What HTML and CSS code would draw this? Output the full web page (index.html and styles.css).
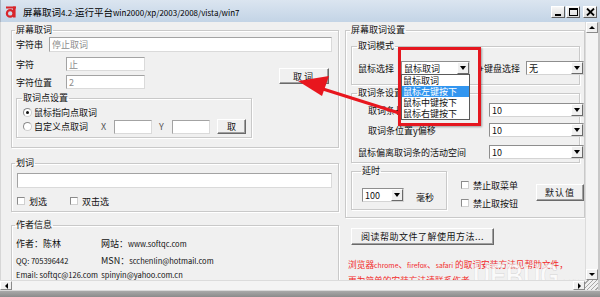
FILE: index.html
```html
<!DOCTYPE html>
<html>
<head>
	<title>屏幕取词4.2</title>
	<meta charset="UTF-8">
	<link rel="stylesheet" href="styles.css">
</head>
<body>
	<div class="window">
		<div class="titlebar">
			<svg class="app-icon" width="12" height="12" viewBox="0 0 12 12">
				<rect x="1" y="0.5" width="10" height="2" fill="#d8262c"/>
				<rect x="8" y="0.5" width="2.6" height="11" fill="#d8262c"/>
				<circle cx="5.2" cy="7.4" r="3.3" fill="none" stroke="#d8262c" stroke-width="2.2"/>
			</svg>
			<span class="title">屏幕取词<em>4.2-</em>运行平台<em>win2000/xp/2003/2008/vista/win7</em></span>
			<div class="caption">
				<span class="cbtn"><i class="ic-min"></i></span>
				<span class="cbtn"><i class="ic-max"></i></span>
				<span class="cbtn close">
					<svg width="9" height="8" viewBox="0 0 9 8"><path d="M1 0.5 L8 7.5 M8 0.5 L1 7.5" stroke="#000" stroke-width="1.8"/></svg>
				</span>
			</div>
		</div>

		<div class="frame">
			<div class="client">
				<!-- 左侧 -->
				<div class="col-left">
					<fieldset class="group g-main">
						<legend>屏幕取词</legend>
						<div class="row r-str">
							<label class="lab-str">字符串</label>
							<input class="txt dim grow" value="停止取词" readonly>
						</div>
						<div class="pair">
							<div class="fields">
								<div class="row r-ch">
									<label class="lab-ch">字符</label>
									<input class="txt dim short" value="止" readonly>
								</div>
								<div class="row r-pos">
									<label class="lab-ch">字符位置</label>
									<input class="txt dim short" value="2" readonly>
								</div>
							</div>
							<button class="btn b-get">取词</button>
						</div>
						<fieldset class="group g-point">
							<legend>取词点设置</legend>
							<div class="row r-radio">
								<span class="radio on"></span>
								<span>鼠标指向点取词</span>
							</div>
							<div class="row r-radio r-xy">
								<span class="radio"></span>
								<span class="rtxt">自定义点取词</span>
								<span class="axis">X</span>
								<input class="txt xy" readonly>
								<span class="axis ay">Y</span>
								<input class="txt xy" readonly>
								<button class="btn b-small">取</button>
							</div>
						</fieldset>
					</fieldset>

					<fieldset class="group g-line">
						<legend>划词</legend>
						<input class="txt line-in" readonly>
						<div class="row r-checks">
							<span class="check"></span><span class="ctxt">划选</span>
							<span class="check c2"></span><span class="ctxt">双击选</span>
						</div>
					</fieldset>

					<fieldset class="group g-author">
						<legend>作者信息</legend>
						<div class="info i1"><span class="k">作者：陈林</span><span>网站：<em>www.softqc.com</em></span></div>
						<div class="info i2"><span class="k"><em>QQ: 705396442</em></span><span>MSN：<em>scchenlin@hotmail.com</em></span></div>
						<div class="info i3"><em>Email: softqc@126.com &nbsp;spinyin@yahoo.com.cn</em></div>
					</fieldset>
				</div>

				<!-- 右侧 -->
				<div class="col-right">
					<fieldset class="group g-set">
						<legend>屏幕取词设置</legend>
						<fieldset class="group g-mode">
							<legend>取词模式</legend>
							<div class="row r-mode">
								<label class="lab-mode">鼠标选择</label>
								<div class="select s-mouse"><span>鼠标取词</span><i class="drop"></i></div>
								<span class="plus">+</span>
								<label class="lab-key">键盘选择</label>
								<div class="select s-key"><span>无</span><i class="drop"></i></div>
							</div>
						</fieldset>
						<fieldset class="group g-bar">
							<legend>取词条设置</legend>
							<div class="row r-bar b1"><label class="ind">取词条长度</label><div class="select s-num"><span>10</span><i class="drop"></i></div></div>
							<div class="row r-bar b2"><label class="ind">取词条位置y偏移</label><div class="select s-num"><span>10</span><i class="drop"></i></div></div>
							<div class="row r-bar b3"><label>鼠标偏离取词条的活动空间</label><div class="select s-num"><span>10</span><i class="drop"></i></div></div>
						</fieldset>
						<div class="misc">
							<div class="delay-cell">
								<fieldset class="group g-delay">
									<legend>延时</legend>
									<div class="row r-delay">
										<div class="select s-delay"><span>100</span><i class="drop"></i></div>
										<span class="ms">毫秒</span>
									</div>
								</fieldset>
							</div>
							<div class="checks">
								<div class="row"><span class="check"></span><span class="ctxt">禁止取菜单</span></div>
								<div class="row r-c2"><span class="check"></span><span class="ctxt">禁止取按钮</span></div>
							</div>
							<button class="btn b-default">默认值</button>
						</div>
					</fieldset>
					<button class="btn b-help">阅读帮助文件了解使用方法...</button>
					<p class="note">浏览器<em>chrome</em>、<em>firefox</em>、<em>safari</em> 的取词安装方法见帮助文件，<br>更为简单的安装方法请联系作者</p>
				</div>

				<!-- 标注 -->
				<ul class="droplist">
					<li>鼠标取词</li>
					<li class="sel">鼠标左键按下</li>
					<li>鼠标中键按下</li>
					<li>鼠标右键按下</li>
				</ul>
				<div class="mark"></div>
				<svg class="arrow" width="110" height="50" viewBox="290 70 110 50">
					<path d="M322 89 L398 113" stroke="#e8161e" stroke-width="3.2" fill="none"/>
					<polygon points="297,81 328,76 321,96" fill="#e8161e"/>
				</svg>
				<div class="watermark">UEBUG<small>.com</small></div>
			</div>

			<div class="vscroll">
				<span class="sbtn"><i class="tri up"></i></span>
				<span class="strack"></span>
				<span class="sbtn"><i class="tri down"></i></span>
			</div>
			<div class="hscroll">
				<span class="sbtn"><i class="tri left"></i></span>
				<span class="strack"></span>
				<span class="sbtn"><i class="tri right"></i></span>
			</div>
			<div class="grip"></div>
		</div>
		<div class="bottom"></div>
	</div>
</body>
</html>
```

FILE: styles.css
```css
*{
	margin: 0;
	padding: 0;
	box-sizing: border-box;
}
body{
	width: 600px;
	height: 297px;
	overflow: hidden;
	background: #8e8e8e;
	font-family: "Noto Sans CJK SC", "Noto Sans", sans-serif;
	font-size: 9px;
	color: #111;
}
em{
	font-style: normal;
}
.window{
	width: 600px;
	height: 297px;
	display: flex;
	flex-direction: column;
	background: #f0f0f0;
}
/* 标题栏 */
.titlebar{
	height: 22px;
	flex: none;
	display: flex;
	align-items: center;
	padding: 2px 0 0 4px;
	background: linear-gradient(#dbe5f0, #c3d4e6);
	border-left: 1px solid #aab6c4;
}
.app-icon{
	flex: none;
}
.title{
	margin-left: 6px;
	font-size: 9.5px;
	line-height: 14px;
	color: #000;
}
.title em{
	font-size: 8px;
}
.caption{
	margin-left: auto;
	display: flex;
	gap: 1px;
	padding-right: 3px;
}
.cbtn{
	width: 14px;
	height: 12px;
	display: flex;
	align-items: center;
	justify-content: center;
	background: linear-gradient(#f7f7f7, #dcdcdc);
	border: 1px solid;
	border-color: #fff #5f5f5f #5f5f5f #fff;
}
.cbtn.close{
	margin-left: 2px;
}
.ic-min{
	width: 6px;
	height: 2px;
	background: #000;
	margin-top: 5px;
}
.ic-max{
	width: 9px;
	height: 8px;
	border: 1px solid #000;
	border-top-width: 2px;
}
/* 主体 */
.frame{
	flex: none;
	display: grid;
	grid-template-columns: 585px 13px;
	grid-template-rows: 258px 10px;
	border-right: 2px solid #c8c8c8;
}
.client{
	position: relative;
	overflow: hidden;
	display: flex;
	gap: 6px;
	padding: 1px 0 0 10px;
	border-left: 1px solid #d6d6d6;
}
.col-left{
	width: 328px;
	flex: none;
}
.col-right{
	width: 240px;
	flex: none;
}
.group{
	border: 1px solid #c9c9c9;
	box-shadow: inset 1px 1px #fff, 1px 1px #fff;
	padding: 0 6px 0 4px;
	min-width: 0;
}
.group > legend{
	line-height: 14px;
	padding: 0 1px;
	margin-left: -1px;
}
.row{
	display: flex;
	align-items: center;
}
label{
	flex: none;
}
.txt{
	height: 15px;
	border: 1px solid #a3a3a3;
	border-right-color: #dadada;
	border-bottom-color: #dadada;
	background: #fff;
	font: inherit;
	padding: 0 2px;
	color: #111;
	outline: none;
}
.txt.dim{
	color: #8d8d8d;
}
.grow{
	flex: 1;
	min-width: 0;
}
.btn{
	font: inherit;
	color: #111;
	background: #f0f0f0;
	border: 1px solid;
	border-color: #fff #6a6a6a #6a6a6a #fff;
	box-shadow: inset -1px -1px #a0a0a0;
}
/* 屏幕取词 */
.r-str{
	height: 15px;
}
.lab-str{
	width: 33px;
}
.pair{
	display: flex;
	align-items: flex-start;
}
.r-ch{
	margin-top: 5px;
}
.r-pos{
	margin-top: 4px;
}
.lab-ch{
	width: 50px;
}
.short{
	width: 79px;
	height: 14px;
}
.b-get{
	width: 50px;
	height: 16px;
	margin: 16px 3px 0 auto;
	letter-spacing: 2px;
}
.g-point{
	width: 236px;
	margin-top: 2px;
	padding: 0 0 3px 6px;
}
.r-radio{
	height: 14px;
}
.r-xy{
	height: 15px;
}
.radio{
	width: 9px;
	height: 9px;
	border-radius: 50%;
	border: 1px solid #8b8b8b;
	border-right-color: #d0d0d0;
	border-bottom-color: #d0d0d0;
	background: #fff;
	margin-right: 2px;
	position: relative;
}
.radio.on::after{
	content: "";
	position: absolute;
	left: 2px;
	top: 2px;
	width: 3px;
	height: 3px;
	border-radius: 50%;
	background: #111;
}
.rtxt{
	width: 67px;
}
.axis{
	width: 13px;
	color: #555;
}
.ay{
	margin-left: 7px;
}
.xy{
	width: 38px;
	height: 14px;
}
.b-small{
	width: 29px;
	height: 15px;
	margin-left: 7px;
}
.g-main{
	padding-bottom: 9px;
}
/* 划词 */
.g-line{
	margin-top: 8px;
	padding-top: 3px;
	padding-bottom: 4px;
}
.line-in{
	display: block;
	width: 315px;
	margin-left: 1px;
}
.r-checks{
	height: 12px;
	margin-top: 7px;
	padding-left: 1px;
}
.check{
	width: 8px;
	height: 8px;
	border: 1px solid #8b8b8b;
	border-right-color: #d0d0d0;
	border-bottom-color: #d0d0d0;
	background: #fff;
	flex: none;
}
.ctxt{
	margin-left: 4px;
}
.c2{
	margin-left: 23px;
}
/* 作者信息 */
.g-author{
	margin-top: 6px;
	padding-top: 4px;
	height: 80px;
}
.info{
	display: flex;
	height: 14px;
	align-items: center;
}
.info em{
	font-size: 7.5px;
}
.info .k{
	width: 85px;
}
.i2{
	margin-top: 3px;
}
/* 屏幕取词设置 */
.g-set{
	padding: 0 4px 7px 5px;
}
.g-mode{
	margin-top: 2px;
	padding: 8px 0 9px 6px;
	width: 229px;
}
.r-mode{
	height: 14px;
}
.lab-mode{
	width: 43px;
}
.select{
	height: 14px;
	display: flex;
	align-items: center;
	background: #fff;
	border: 1px solid #8e8e8e;
	border-right-color: #d4d4d4;
	border-bottom-color: #d4d4d4;
	padding-left: 2px;
	flex: none;
}
.select span{
	flex: 1;
}
.drop{
	width: 12px;
	height: 12px;
	background: #f0f0f0;
	border: 1px solid;
	border-color: #fff #6a6a6a #6a6a6a #fff;
	position: relative;
}
.drop::after{
	content: "";
	position: absolute;
	left: 2px;
	top: 3px;
	border-top: 4px solid #000;
	border-left: 3px solid transparent;
	border-right: 3px solid transparent;
}
.s-mouse{
	width: 69px;
}
.plus{
	margin-left: 9px;
	width: 6px;
}
.lab-key{
	width: 42px;
}
.s-key{
	width: 58px;
}
.g-bar{
	margin-top: 1px;
	padding: 3px 0 3px 6px;
	width: 229px;
}
.r-bar{
	height: 14px;
	justify-content: space-between;
}
.r-bar .ind{
	padding-left: 10px;
}
.b2{
	margin-top: 6px;
}
.b3{
	margin-top: 8px;
}
.s-num{
	width: 95px;
	margin-right: -5px;
}
.misc{
	display: flex;
	align-items: flex-start;
	margin-top: 1px;
	width: 229px;
}
.delay-cell{
	width: 96px;
	flex: none;
}
.g-delay{
	padding: 10px 0 7px 10px;
}
.r-delay{
	height: 14px;
}
.s-delay{
	width: 42px;
}
.ms{
	margin-left: 12px;
	margin-top: 4px;
}
.checks{
	margin: 14px 0 0 14px;
	width: 75px;
	flex: none;
}
.checks .row{
	height: 14px;
}
.r-c2{
	margin-top: 4px;
}
.b-default{
	flex: none;
	width: 48px;
	height: 17px;
	margin-top: 20px;
	letter-spacing: 1px;
}
.b-help{
	display: block;
	width: 143px;
	height: 17px;
	margin: 10px 0 0 6px;
	letter-spacing: 0.5px;
}
.note{
	margin: 12px 0 0 3px;
	font-size: 8.7px;
	line-height: 16px;
	color: #f22a2a;
	white-space: nowrap;
}
.note em{
	font-size: 6.8px;
}
/* 标注层 */
.droplist{
	position: absolute;
	left: 400px;
	top: 52px;
	width: 69px;
	background: #fff;
	border: 1px solid #5a5a5a;
	list-style: none;
	z-index: 2;
}
.droplist li{
	height: 11px;
	line-height: 11px;
	padding-left: 1px;
}
.droplist .sel{
	background: #3296f0;
	color: #fff;
}
.mark{
	position: absolute;
	left: 397px;
	top: 25px;
	width: 83px;
	height: 79px;
	border: 3px solid #e5171f;
	box-shadow: 1px 1px 2px rgba(0,0,0,0.35);
	z-index: 3;
}
.arrow{
	position: absolute;
	left: 290px;
	top: 48px;
	z-index: 3;
}
.watermark{
	position: absolute;
	left: 472px;
	top: 236px;
	font-family: "Liberation Sans", sans-serif;
	font-weight: bold;
	font-size: 33px;
	line-height: 36px;
	color: rgba(255,255,255,0.7);
	-webkit-text-stroke: 0.5px rgba(160,160,160,0.45);
	transform: scaleX(0.72);
	transform-origin: left top;
	z-index: 4;
}
.watermark small{
	font-size: 13px;
}
/* 滚动条 */
.vscroll{
	display: flex;
	flex-direction: column;
	background: #f4f4f4;
	border-left: 1px solid #dcdcdc;
}
.hscroll{
	display: flex;
	background: #f4f4f4;
	border-top: 1px solid #dcdcdc;
}
.strack{
	flex: 1;
}
.sbtn{
	flex: none;
	width: 12px;
	height: 11px;
	display: flex;
	align-items: center;
	justify-content: center;
	background: #f0f0f0;
	border: 1px solid;
	border-color: #fff #8a8a8a #8a8a8a #fff;
}
.hscroll .sbtn{
	height: 9px;
}
.tri{
	width: 0;
	height: 0;
	border: 3px solid transparent;
}
.tri.up{
	border-bottom: 3px solid #000;
	border-top-width: 0;
}
.tri.down{
	border-top: 3px solid #000;
	border-bottom-width: 0;
}
.tri.left{
	border-right: 3px solid #000;
	border-left-width: 0;
}
.tri.right{
	border-left: 3px solid #000;
	border-right-width: 0;
}
.grip{
	background: repeating-linear-gradient(135deg, #f0f0f0 0 2px, #a8a8a8 2px 3px);
}
.bottom{
	flex: 1;
	background: linear-gradient(#a9a9a9, #8b8b8b);
	border-top: 1px solid #d8d8d8;
}
```
